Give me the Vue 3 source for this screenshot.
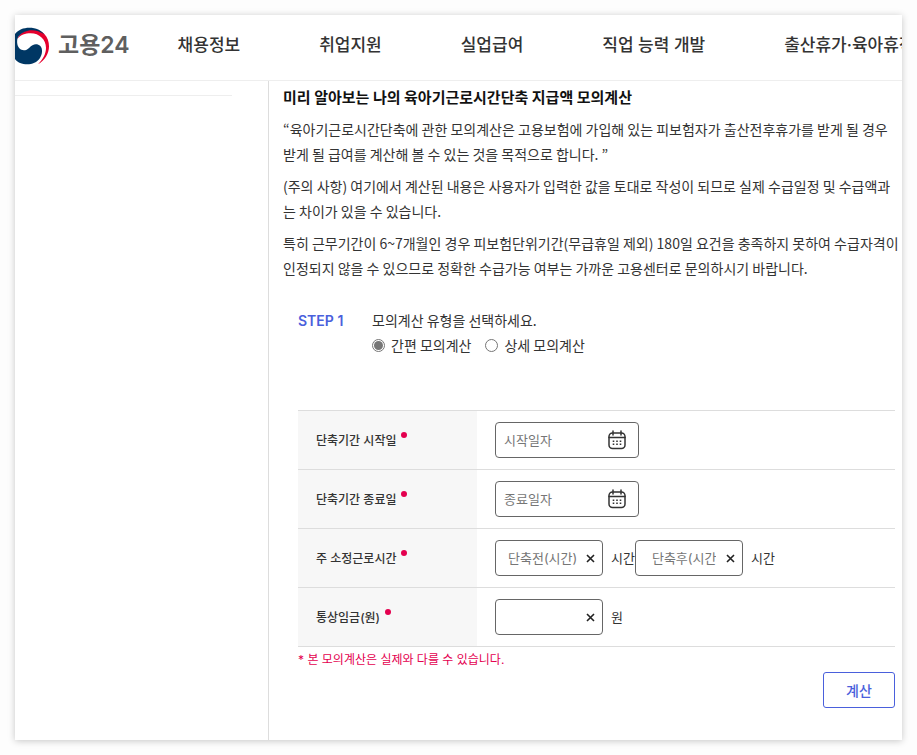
<script setup>
import { ref } from 'vue'

const menus = ['채용정보', '취업지원', '실업급여', '직업 능력 개발', '출산휴가·육아휴직']
const mode = ref('simple')
const dates = ref([
  { id: 'start', label: '단축기간 시작일', hint: '시작일자', value: '' },
  { id: 'end', label: '단축기간 종료일', hint: '종료일자', value: '' },
])
const before = ref('')
const after = ref('')
const wage = ref('')
</script>

<template>
  <div class="page">
    <div class="card">
      <header class="header">
        <a class="logo" href="#">
          <svg class="emblem" viewBox="45 80 105 114" aria-hidden="true">
            <path fill="#e6002d" d="M52 115C60 98 72 90 88 88C108 86 124 91 133 101C143 112 147 124 147 138C147 160 135 180 114 192C130 175 138 160 138 142C138 118 118 99 92 99C75 99 62 104 52 116Z" />
            <path fill="#003764" d="M45 101C55 88 70 82 88 82C108 82 124 90 133 102C118 92 100 87 84 91C70 94 60 100 52 114L45 118Z" />
            <path fill="#003764" d="M45 100L54 108C50 120 50 135 58 144C68 154 80 150 88 142C98 130 112 128 121 137C129 146 127 162 120 173C112 186 96 192 82 192C66 192 52 186 45 176Z" />
          </svg>
          <span>고용24</span>
        </a>
        <nav class="nav">
          <a v-for="menu in menus" :key="menu" href="#">{{ menu }}</a>
        </nav>
      </header>

      <div class="body">
        <aside class="side"><hr /></aside>
        <main class="main">
          <h1>미리 알아보는 나의 육아기근로시간단축 지급액 모의계산</h1>
          <p>“육아기근로시간단축에 관한 모의계산은 고용보험에 가입해 있는 피보험자가 출산전후휴가를 받게 될 경우<br />받게 될 급여를 계산해 볼 수 있는 것을 목적으로 합니다. ”</p>
          <p>(주의 사항) 여기에서 계산된 내용은 사용자가 입력한 값을 토대로 작성이 되므로 실제 수급일정 및 수급액과<br />는 차이가 있을 수 있습니다.</p>
          <p>특히 근무기간이 6~7개월인 경우 피보험단위기간(무급휴일 제외) 180일 요건을 충족하지 못하여 수급자격이<br />인정되지 않을 수 있으므로 정확한 수급가능 여부는 가까운 고용센터로 문의하시기 바랍니다.</p>

          <form class="form" @submit.prevent>
            <div class="step">
              <strong>STEP 1</strong>
              <div class="question">
                <div id="mode-title">모의계산 유형을 선택하세요.</div>
                <div class="choices" role="radiogroup" aria-labelledby="mode-title">
                  <label><input v-model="mode" type="radio" name="mode" value="simple" />간편 모의계산</label>
                  <label><input v-model="mode" type="radio" name="mode" value="detail" />상세 모의계산</label>
                </div>
              </div>
            </div>

            <table class="table">
              <tbody>
                <tr v-for="date in dates" :key="date.id">
                  <th scope="row"><label class="required" :for="date.id">{{ date.label }}</label></th>
                  <td>
                    <div class="field date">
                      <input :id="date.id" v-model="date.value" type="text" :placeholder="date.hint" />
                      <button type="button" :aria-label="date.hint">
                        <svg width="18" height="20" viewBox="0 0 18 20" fill="none" stroke="#333" stroke-width="1.5" stroke-linecap="round" aria-hidden="true">
                          <rect x="1" y="3" width="16" height="15.5" rx="3.5" />
                          <path d="M1 7.5H17M5 1V5M13 1V5" />
                          <path stroke-width="1.6" stroke-linecap="butt" d="M4.7 11.2h1.6M8.2 11.2h1.6M11.7 11.2h1.6M4.7 14.2h1.6M8.2 14.2h1.6M11.7 14.2h1.6" />
                        </svg>
                      </button>
                    </div>
                  </td>
                </tr>
                <tr>
                  <th scope="row"><label class="required" for="before">주 소정근로시간</label></th>
                  <td>
                    <div class="line">
                      <div class="field number">
                        <input id="before" v-model="before" type="text" placeholder="단축전(시간)" />
                        <button type="button" aria-label="지우기" @click="before = ''">
                          <svg width="9" height="9" viewBox="0 0 9 9" aria-hidden="true"><path d="M1 1L8 8M8 1L1 8" stroke="#222" stroke-width="1.6" /></svg>
                        </button>
                      </div>
                      <span class="unit">시간</span>
                      <div class="field number inset">
                        <input v-model="after" type="text" placeholder="단축후(시간)" aria-label="단축후(시간)" />
                        <button type="button" aria-label="지우기" @click="after = ''">
                          <svg width="9" height="9" viewBox="0 0 9 9" aria-hidden="true"><path d="M1 1L8 8M8 1L1 8" stroke="#222" stroke-width="1.6" /></svg>
                        </button>
                      </div>
                      <span class="unit">시간</span>
                    </div>
                  </td>
                </tr>
                <tr>
                  <th scope="row"><label class="required" for="wage">통상임금(원)</label></th>
                  <td>
                    <div class="line">
                      <div class="field number">
                        <input id="wage" v-model="wage" type="text" />
                        <button type="button" aria-label="지우기" @click="wage = ''">
                          <svg width="9" height="9" viewBox="0 0 9 9" aria-hidden="true"><path d="M1 1L8 8M8 1L1 8" stroke="#222" stroke-width="1.6" /></svg>
                        </button>
                      </div>
                      <span class="unit">원</span>
                    </div>
                  </td>
                </tr>
              </tbody>
            </table>
            <div class="note">* 본 모의계산은 실제와 다를 수 있습니다.</div>
            <div class="actions"><button class="submit" type="submit">계산</button></div>
          </form>
        </main>
      </div>
    </div>
  </div>
</template>

<style>
body {
  background: #fdfdfd;
}
</style>

<style scoped>
.page,
.page * {
  box-sizing: border-box;
}
.page {
  display: flex;
  min-height: 100vh;
  padding: 15px;
  color: #333;
  font-family: Inter, "Noto Sans CJK KR", sans-serif;
  font-size: 14px;
  line-height: 25px;
}
.card {
  display: flex;
  flex: 1;
  flex-direction: column;
  min-width: 0;
  background: #fff;
  box-shadow: 0 1px 7px rgba(0, 0, 0, 0.22);
}
a {
  color: inherit;
  text-decoration: none;
}
.header {
  display: flex;
  align-items: center;
  gap: 48px;
  height: 66px;
  padding-bottom: 4px;
  overflow: hidden;
  border-bottom: 1px solid #eee;
  white-space: nowrap;
}
.logo {
  display: flex;
  flex-shrink: 0;
  align-items: center;
  gap: 8px;
  color: #5f5f5f;
  font-size: 23px;
  font-weight: 600;
}
.emblem {
  width: 35px;
  height: 38px;
}
.nav {
  display: flex;
  gap: 79px;
  font-size: 17px;
  font-weight: 500;
}
.body {
  display: flex;
  flex: 1;
}
.side {
  flex: 0 0 254px;
  padding: 14px 36px 0 0;
  border-right: 1px solid #ddd;
}
hr {
  margin: 0;
  border: 0;
  border-top: 1px solid #eee;
}
.main {
  flex: 1;
  min-width: 0;
  padding: 4px 7px 32px 14px;
}
h1 {
  margin: 0 0 7px;
  color: #111;
  font-size: 15px;
  font-weight: 700;
  line-height: 25px;
}
p {
  margin: 0 0 7px;
  white-space: nowrap;
}
p,
.question {
  font-family: "Noto Sans CJK KR", sans-serif;
}
.form {
  padding: 20px 0 0 15px;
}
.step {
  display: flex;
  gap: 26px;
  margin-bottom: 52px;
}
.step strong {
  flex: 0 0 48px;
  color: #4a60dc;
  font-weight: 600;
  white-space: nowrap;
}
.choices {
  display: flex;
  gap: 14px;
}
.choices label {
  display: flex;
  align-items: center;
  gap: 6px;
}
input[type="radio"] {
  width: 13px;
  height: 13px;
  margin: 0;
  appearance: none;
  border: 1px solid #767676;
  border-radius: 50%;
}
input[type="radio"]:checked {
  padding: 1px;
  background: #767676 content-box;
}
.table {
  width: 100%;
  border-collapse: collapse;
  table-layout: fixed;
}
.table th,
.table td {
  height: 59px;
  padding: 0 18px;
  border-top: 1px solid #ddd;
  border-bottom: 1px solid #ddd;
  text-align: left;
}
.table th {
  width: 179px;
  background: #f7f7f7;
  font-size: 12px;
  font-weight: 500;
}
.required {
  display: inline-flex;
  gap: 5px;
}
.required::after {
  width: 6px;
  height: 6px;
  margin-top: 4px;
  border-radius: 50%;
  background: #e4004f;
  content: "";
}
.line {
  display: flex;
  align-items: center;
}
.field {
  display: flex;
  height: 36px;
  overflow: hidden;
  border: 1px solid #666;
  border-radius: 4px;
  background: #fff;
}
.field input {
  flex: 1;
  min-width: 0;
  padding: 0;
  border: 0;
  outline: 0;
  background: transparent;
  color: #333;
  font-family: inherit;
  font-size: 13px;
}
.field input::placeholder {
  color: #767676;
}
.field button {
  display: flex;
  align-items: center;
  padding: 0;
  border: 0;
  background: none;
}
.date {
  width: 144px;
  padding: 0 12px 0 8px;
}
.number {
  width: 108px;
  padding: 0 7px 0 12px;
}
.number button {
  padding-left: 6px;
}
.inset {
  padding-left: 16px;
}
.inset button {
  padding-left: 10px;
}
.unit {
  padding-left: 8px;
  font-size: 13px;
}
.note {
  color: #e4004f;
  font-size: 12px;
}
.actions {
  display: flex;
  justify-content: flex-end;
}
.submit {
  width: 72px;
  height: 36px;
  padding: 0;
  border: 1px solid #4a60dc;
  border-radius: 3px;
  background: #fff;
  color: #4a60dc;
  font-family: inherit;
  font-size: 14px;
  font-weight: 500;
}
</style>
